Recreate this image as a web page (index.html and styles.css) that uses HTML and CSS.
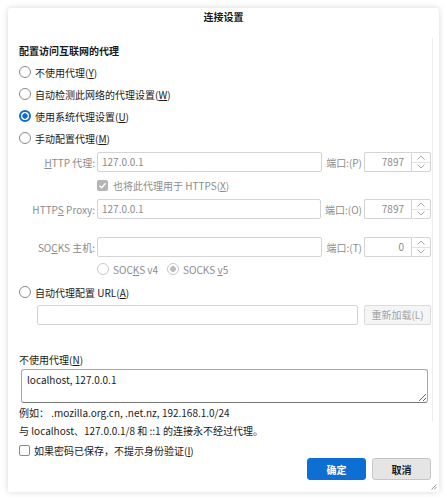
FILE: index.html
```html
<!DOCTYPE html>
<html lang="zh-CN">
<head>
    <meta charset="UTF-8">
    <meta name="viewport" content="width=device-width, initial-scale=1.0">
    <title>连接设置</title>
    <link rel="stylesheet" href="styles.css">
</head>
<body>
    <div class="dialog">
        <div class="titlebar">连接设置</div>

        <div class="pane">
            <h2 class="heading">配置访问互联网的代理</h2>
            <div class="option first"><span class="radio"></span><span>不使用代理(<u>Y</u>)</span></div>
            <div class="option"><span class="radio"></span><span>自动检测此网络的代理设置(<u>W</u>)</span></div>
            <div class="option"><span class="radio on"></span><span>使用系统代理设置(<u>U</u>)</span></div>
            <div class="option"><span class="radio"></span><span>手动配置代理(<u>M</u>)</span></div>

            <div class="proxy-row http">
                <span class="proxy-label"><u>H</u>TTP 代理:</span>
                <div class="field">127.0.0.1</div>
                <span class="port-label">端口:(P)</span>
                <div class="port">
                    <div class="port-num">7897</div>
                    <div class="spin">
                        <span><svg width="8" height="5" viewBox="0 0 8 5"><polyline points="0.5,4.5 4,1 7.5,4.5" fill="none" stroke="#a8a8a8" stroke-width="1"/></svg></span>
                        <span><svg width="8" height="5" viewBox="0 0 8 5"><polyline points="0.5,0.5 4,4 7.5,0.5" fill="none" stroke="#a8a8a8" stroke-width="1"/></svg></span>
                    </div>
                </div>
            </div>

            <div class="check-row">
                <span class="checkbox checked"><svg width="11" height="11" viewBox="0 0 11 11"><polyline points="2.5,5.8 4.6,7.8 8.6,3.2" fill="none" stroke="#fff" stroke-width="1.4"/></svg></span>
                <span>也将此代理用于 HTTPS(<u>X</u>)</span>
            </div>

            <div class="proxy-row https">
                <span class="proxy-label">HTTP<u>S</u> Proxy:</span>
                <div class="field">127.0.0.1</div>
                <span class="port-label">端口:(O)</span>
                <div class="port">
                    <div class="port-num">7897</div>
                    <div class="spin">
                        <span><svg width="8" height="5" viewBox="0 0 8 5"><polyline points="0.5,4.5 4,1 7.5,4.5" fill="none" stroke="#a8a8a8" stroke-width="1"/></svg></span>
                        <span><svg width="8" height="5" viewBox="0 0 8 5"><polyline points="0.5,0.5 4,4 7.5,0.5" fill="none" stroke="#a8a8a8" stroke-width="1"/></svg></span>
                    </div>
                </div>
            </div>

            <div class="proxy-row socks">
                <span class="proxy-label">SO<u>C</u>KS 主机:</span>
                <div class="field"></div>
                <span class="port-label">端口:(T)</span>
                <div class="port">
                    <div class="port-num">0</div>
                    <div class="spin">
                        <span><svg width="8" height="5" viewBox="0 0 8 5"><polyline points="0.5,4.5 4,1 7.5,4.5" fill="none" stroke="#a8a8a8" stroke-width="1"/></svg></span>
                        <span><svg width="8" height="5" viewBox="0 0 8 5"><polyline points="0.5,0.5 4,4 7.5,0.5" fill="none" stroke="#a8a8a8" stroke-width="1"/></svg></span>
                    </div>
                </div>
            </div>

            <div class="socks-version">
                <span class="ver"><span class="radio off"></span><span>SOC<u>K</u>S v4</span></span>
                <span class="ver"><span class="radio off on-off"></span><span>SOCKS <u>v</u>5</span></span>
            </div>

            <div class="option auto"><span class="radio"></span><span>自动代理配置 URL(<u>A</u>)</span></div>
            <div class="url-row">
                <div class="url-field"></div>
                <div class="reload">重新加载(L)</div>
            </div>

            <div class="no-proxy-label">不使用代理(<u>N</u>)</div>
            <textarea class="no-proxy">localhost, 127.0.0.1</textarea>
            <div class="note">例如：&nbsp;.mozilla.org.cn, .net.nz, 192.168.1.0/24</div>
        </div>

        <div class="note outside">与 localhost、127.0.0.1/8 和 ::1 的连接永不经过代理。</div>
        <div class="auth-row"><span class="checkbox"></span><span>如果密码已保存，不提示身份验证(<u>I</u>)</span></div>

        <div class="footer">
            <button class="btn primary">确定</button>
            <button class="btn">取消</button>
        </div>

        <svg class="grip" width="6" height="6" viewBox="0 0 6 6"><line x1="5.5" y1="0.5" x2="0.5" y2="5.5" stroke="#9a9a9a"/><line x1="5.5" y1="3" x2="3" y2="5.5" stroke="#9a9a9a"/></svg>
    </div>
</body>
</html>
```

FILE: styles.css
```css
body {
    margin: 0;
    background-color: #fff;
    font-family: "Noto Sans CJK SC", "Noto Sans", sans-serif;
    font-size: 10px;
    color: #1a1a1a;
}
u {
    text-underline-offset: 1px;
}
.dialog {
    position: relative;
    margin: 8px;
    width: 431px;
    height: 484px;
    border-radius: 3px;
    box-shadow: 0 0 6px rgba(0,0,0,0.16);
    display: flex;
    flex-direction: column;
}
.titlebar {
    height: 18px;
    line-height: 18px;
    text-align: center;
    font-weight: bold;
}
.pane {
    margin: 12px 6px 0 0;
    padding: 6px 0 0 11px;
    border-right: 1px solid #ececec;
}
.heading {
    margin: 0;
    font-size: 10px;
    font-weight: bold;
    height: 14px;
    line-height: 14px;
}
.option {
    display: flex;
    align-items: center;
    gap: 4px;
    height: 22px;
}
.option.first {
    margin-top: 3px;
}
.option.auto {
    margin-top: 4px;
}
.radio {
    flex: none;
    width: 12px;
    height: 12px;
    box-sizing: border-box;
    border: 1px solid #8a8a8a;
    border-radius: 50%;
    background-color: #fff;
}
.radio.on {
    border: 2px solid #0f6cce;
    background: radial-gradient(circle, #0f6cce 0 2.4px, #fff 3px);
}
.radio.off {
    border-color: #c9c9c9;
}
.radio.on-off {
    background: radial-gradient(circle, #bdbdbd 0 2.6px, #fff 3.2px);
}

/* manual proxy rows */
.proxy-row {
    display: flex;
    align-items: center;
    height: 20px;
    margin-right: 1px;
    color: #8c8c8c;
}
.proxy-row.http {
    margin-top: 3px;
}
.proxy-row.https {
    margin-top: 5px;
}
.proxy-row.socks {
    margin-top: 18px;
}
.proxy-label {
    flex: none;
    width: 76px;
    text-align: right;
    white-space: nowrap;
}
.field {
    flex: 1;
    margin-left: 2px;
    height: 20px;
    box-sizing: border-box;
    border: 1px solid #d4d4d4;
    border-radius: 2px;
    padding-left: 4px;
    line-height: 18px;
}
.port-label {
    flex: none;
    margin: 0 2px 0 4px;
    white-space: nowrap;
}
.port {
    flex: none;
    display: flex;
    height: 20px;
}
.port-num {
    width: 47px;
    box-sizing: border-box;
    border: 1px solid #d4d4d4;
    border-right: none;
    border-radius: 2px 0 0 2px;
    text-align: right;
    padding-right: 7px;
    line-height: 18px;
}
.spin {
    width: 20px;
    box-sizing: border-box;
    border: 1px solid #d4d4d4;
    border-radius: 0 2px 2px 0;
    display: flex;
    flex-direction: column;
}
.spin span {
    flex: 1;
    display: flex;
    align-items: center;
    justify-content: center;
}
.spin span:first-child {
    border-bottom: 1px solid #e2e2e2;
}
.check-row {
    display: flex;
    align-items: center;
    gap: 5px;
    height: 18px;
    margin: 4px 0 0 78px;
    color: #8c8c8c;
}
.checkbox {
    flex: none;
    width: 11px;
    height: 11px;
    box-sizing: border-box;
    border: 1px solid #8a8a8a;
    border-radius: 2px;
    background-color: #fff;
}
.checkbox.checked {
    border: none;
    background-color: #b5b5b5;
}
.checkbox svg {
    display: block;
}
.socks-version {
    display: flex;
    align-items: center;
    height: 16px;
    margin: 4px 0 0 78px;
    color: #8c8c8c;
}
.ver {
    display: flex;
    align-items: center;
    gap: 4px;
    margin-right: 9px;
}

/* auto config */
.url-row {
    display: flex;
    margin: 2px 0 0 18px;
    height: 20px;
}
.url-field {
    width: 321px;
    box-sizing: border-box;
    border: 1px solid #d4d4d4;
    border-radius: 2px;
}
.reload {
    margin-left: 6px;
    width: 67px;
    box-sizing: border-box;
    border: 1px solid #dcdcdc;
    border-radius: 2px;
    background-color: #f5f5f5;
    color: #a4a4a4;
    text-align: center;
    line-height: 18px;
}
.no-proxy-label {
    margin-top: 28px;
    height: 14px;
    line-height: 14px;
}
.no-proxy {
    display: block;
    margin: 2px 0 0 2px;
    width: 407px;
    height: 34px;
    box-sizing: border-box;
    border: 1px solid #a6a6a6;
    border-bottom-color: #7a7a7a;
    border-radius: 3px;
    padding: 3px 5px;
    font: inherit;
    line-height: 14px;
    color: #1a1a1a;
    resize: vertical;
    outline: none;
}
.note {
    margin-top: 2px;
    height: 16px;
    line-height: 16px;
    white-space: nowrap;
}
.note.outside {
    margin-left: 11px;
}
.auth-row {
    display: flex;
    align-items: center;
    gap: 4px;
    height: 14px;
    margin: 4px 0 0 11px;
}
.footer {
    display: flex;
    justify-content: flex-end;
    gap: 6px;
    padding-right: 8px;
    margin-top: 1px;
}
.btn {
    width: 59px;
    height: 22px;
    box-sizing: border-box;
    border: 1px solid #c6c6c6;
    border-radius: 3px;
    background-color: #e5e5e5;
    font-family: inherit;
    font-size: 10px;
    font-weight: bold;
    color: #1a1a1a;
    padding: 0;
}
.btn.primary {
    border-color: #0d6ed3;
    background-color: #0d6ed3;
    color: #fff;
}
.grip {
    position: absolute;
    right: 2px;
    bottom: 2px;
}
```
